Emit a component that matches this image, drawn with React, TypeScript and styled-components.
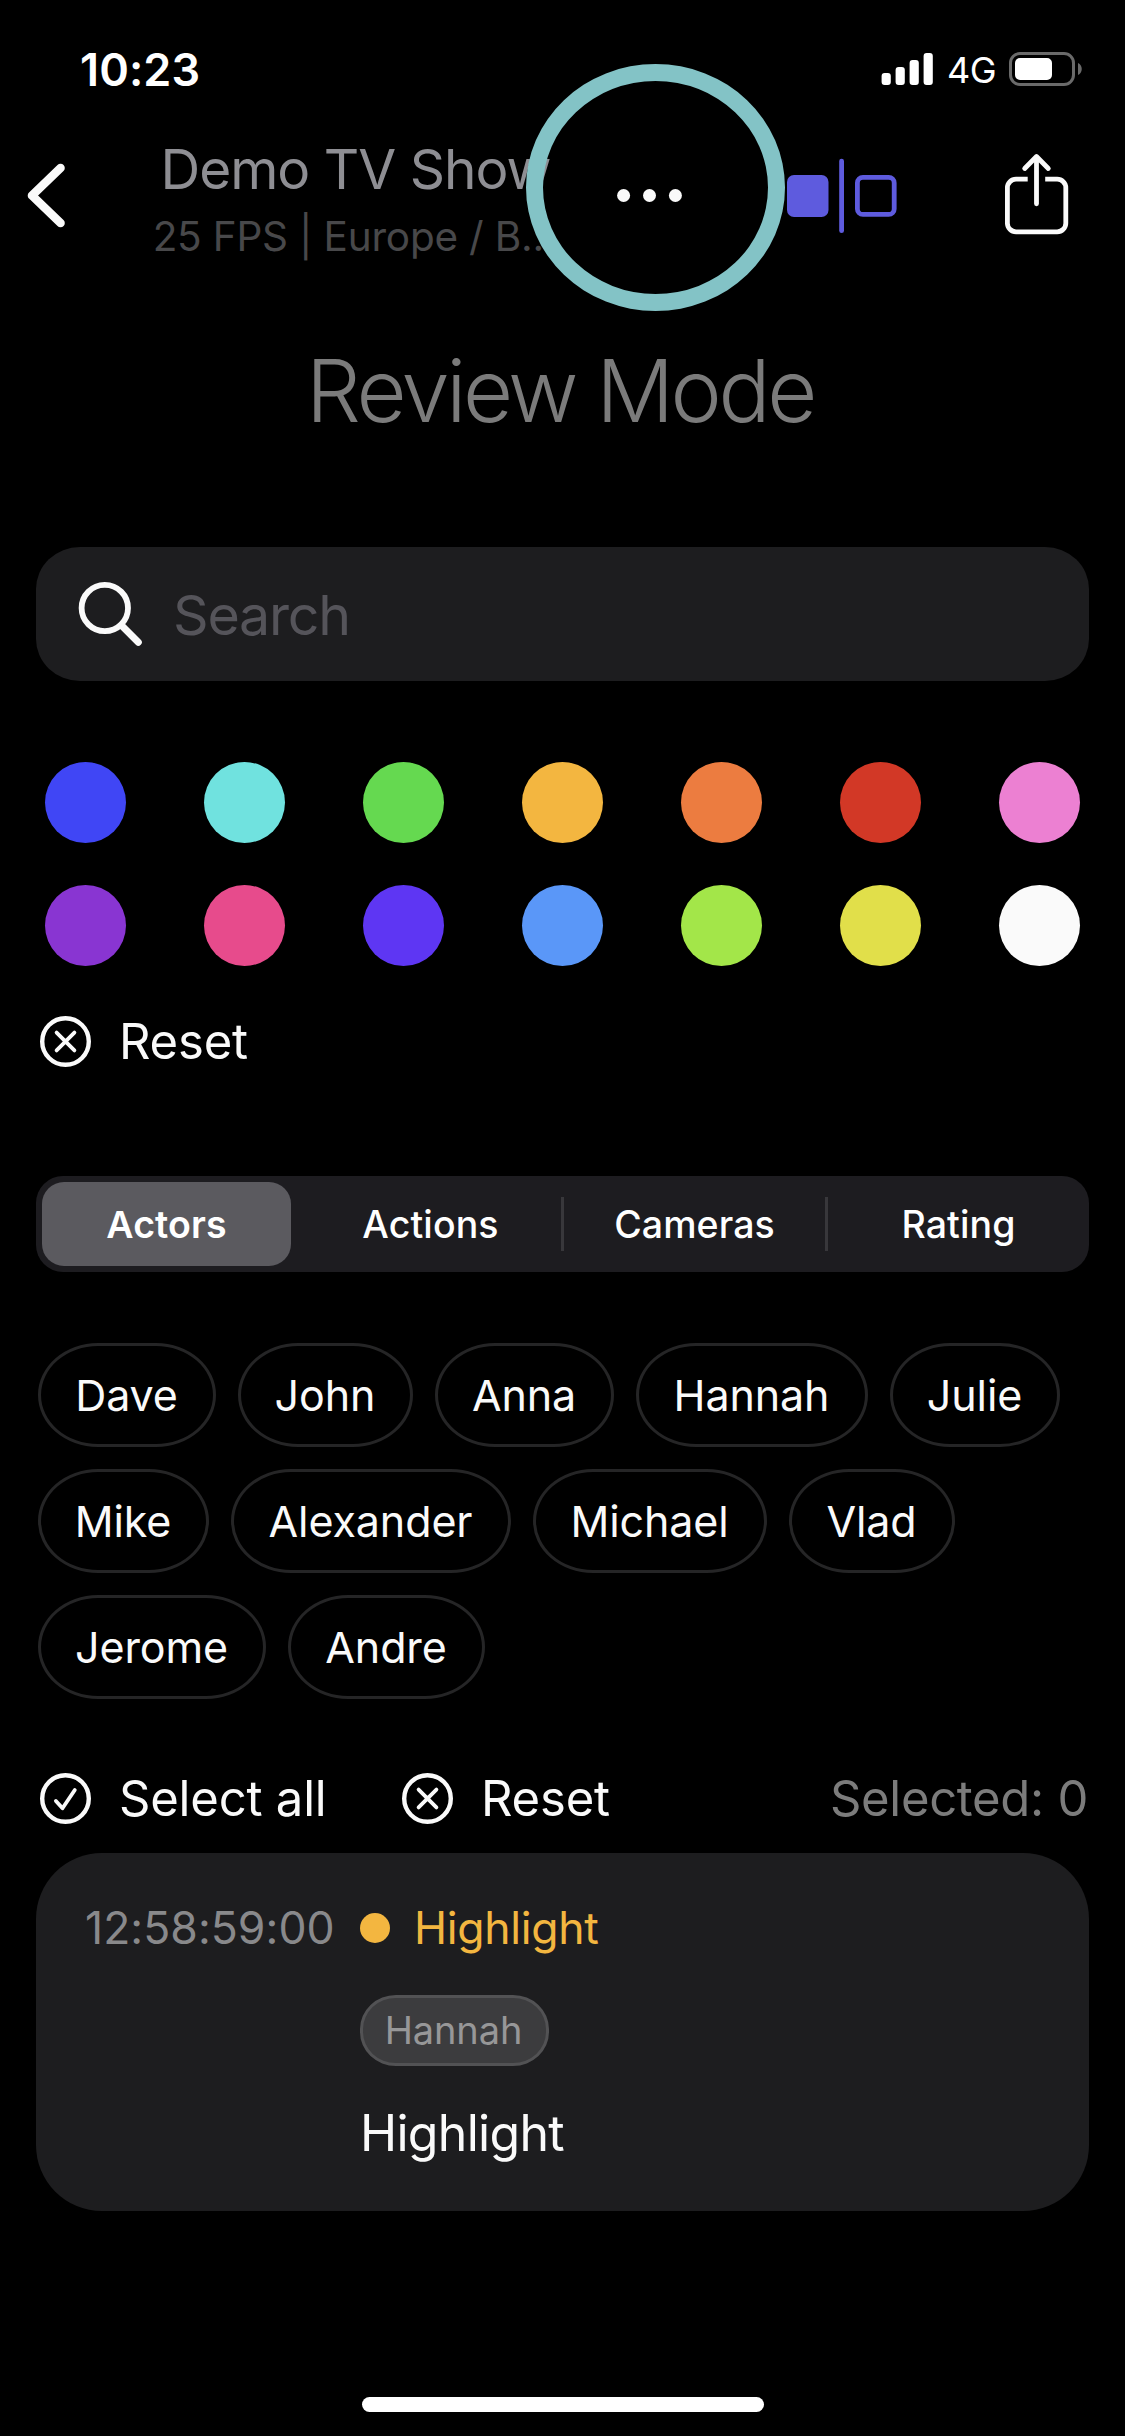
import React from "react";
import styled, { createGlobalStyle } from "styled-components";

const GlobalStyle = createGlobalStyle`
  *, *::before, *::after { box-sizing: border-box; }
  html, body { margin: 0; padding: 0; background: #000; }
  body { font-family: Inter, "Liberation Sans", sans-serif; color: #fafafa; }
  button { font: inherit; color: inherit; background: none; border: 0; padding: 0; margin: 0; }
  svg { display: block; flex: none; }
`;

const Screen = styled.div`
  width: 1125px;
  height: 2436px;
  background: #000;
  display: flex;
  flex-direction: column;
  overflow: hidden;
`;

const StatusBar = styled.header`
  flex: none;
  height: 138px;
  padding: 0 43px 0 80px;
  display: flex;
  align-items: center;
  justify-content: space-between;
  color: #fff;
`;

const Clock = styled.span`
  font-size: 45px;
  font-weight: 600;
  letter-spacing: 0.1px;
`;

const StatusIcons = styled.div`
  display: flex;
  align-items: center;
`;

const Network = styled.span`
  width: 48px;
  margin: 2px 14px 0 14px;
  font-size: 36px;
  line-height: 40px;
  font-weight: 400;
  letter-spacing: -0.5px;
  white-space: nowrap;
`;

const NavBar = styled.nav`
  flex: none;
  height: 124px;
  display: grid;
  grid-template-columns: 155px 397px 1fr;
  align-items: start;
`;

const NavButton = styled.button<{ $left?: number }>`
  position: relative;
  display: block;
  margin-left: ${(p) => p.$left ?? 0}px;
`;

const NavActions = styled.div`
  display: flex;
`;

const TitleBlock = styled.div`
  display: flex;
  flex-direction: column;
  align-items: center;
  padding-top: 1px;
  white-space: nowrap;
`;

const ShowTitle = styled.div`
  margin-left: 4px;
  font-size: 55px;
  line-height: 60px;
  letter-spacing: -1px;
  color: #8e8e93;
`;

const ShowMeta = styled.div`
  margin: 13px 0 0 1px;
  font-size: 40.5px;
  line-height: 50px;
  letter-spacing: -0.2px;
  color: #48484a;
`;

const FocusRing = styled.span`
  position: absolute;
  left: -85px;
  top: -74px;
  width: 259px;
  height: 247px;
  border: 17px solid #83c3c6;
  border-radius: 50%;
`;

const Content = styled.main`
  flex: 1;
  padding: 0 36px;
  display: flex;
  flex-direction: column;
`;

const Heading = styled.h1`
  margin: 79px 0 0;
  font-size: 86.5px;
  line-height: 100px;
  font-weight: 300;
  letter-spacing: -3.4px;
  text-indent: -5px;
  text-align: center;
  color: #7b7b7b;
`;

const SearchField = styled.div`
  height: 134px;
  margin-top: 106px;
  padding-left: 42px;
  display: flex;
  align-items: center;
  gap: 29px;
  border-radius: 44px / 42px;
  background: #1d1d1f;
  font-size: 55.5px;
  letter-spacing: -1.2px;
  color: #55545a;
`;

const Swatches = styled.div`
  margin-top: 81px;
  padding: 0 9px;
  display: grid;
  grid-template-columns: repeat(7, 81px);
  justify-content: space-between;
  row-gap: 42px;
`;

const Swatch = styled.button<{ $color: string }>`
  width: 81px;
  height: 81px;
  border-radius: 50%;
  background: ${(p) => p.$color};
`;

const ActionRow = styled.div<{ $top: number }>`
  height: 51px;
  margin-top: ${(p) => p.$top}px;
  padding: 0 1px 0 4px;
  display: flex;
  align-items: center;
`;

const Action = styled.button<{ $width?: number }>`
  width: ${(p) => (p.$width ? `${p.$width}px` : "auto")};
  display: flex;
  align-items: center;
  gap: 28px;
  font-size: 49px;
  line-height: 52px;
  letter-spacing: -0.2px;
  white-space: nowrap;
`;

const SelectedCount = styled.span`
  margin-left: auto;
  font-size: 49px;
  line-height: 52px;
  letter-spacing: -0.3px;
  color: #7c7c7c;
`;

const Segments = styled.div`
  height: 96px;
  margin-top: 109px;
  display: grid;
  grid-template-columns: 264px 264px 264px 1fr;
  border-radius: 27px;
  background: #1d1c20;
`;

const Segment = styled.button<{ $selected?: boolean; $divided?: boolean }>`
  display: flex;
  align-items: center;
  justify-content: center;
  margin: ${(p) => (p.$selected ? "6px 9px 6px 6px" : "0")};
  padding: ${(p) => (p.$divided ? "0 3px 0 0" : "0")};
  border-radius: ${(p) => (p.$divided ? 0 : 22)}px;
  background: ${(p) =>
    p.$selected
      ? "#5b5a5f"
      : p.$divided
        ? "linear-gradient(#38373b, #38373b) right center / 3px 54px no-repeat"
        : "none"};
  font-size: 37.5px;
  font-weight: ${(p) => (p.$selected ? 600 : 500)};
  letter-spacing: 0.1px;
  color: #fff;
`;

const Chips = styled.div`
  margin: 71px 0 0 2px;
  display: flex;
  flex-direction: column;
  gap: 22px;
`;

const ChipRow = styled.div`
  display: flex;
  gap: 22px;
`;

const Chip = styled.button<{ $width: number }>`
  width: ${(p) => p.$width}px;
  height: 104px;
  padding-right: 1px;
  display: flex;
  align-items: center;
  justify-content: center;
  border: 3px solid #252526;
  border-radius: 60px / 52px;
  font-size: 43px;
  letter-spacing: -0.1px;
`;

const Card = styled.article`
  height: 358px;
  margin-top: 29px;
  padding: 45px 49px 0;
  display: grid;
  grid-template-columns: 275px 1fr;
  align-items: start;
  border-radius: 66px;
  background: #1d1d1f;
`;

const Timecode = styled.time`
  font-size: 44.5px;
  line-height: 60px;
  letter-spacing: 0.05px;
  color: #89898b;
`;

const Entry = styled.div`
  display: flex;
  flex-direction: column;
  align-items: flex-start;
`;

const EntryLabel = styled.div`
  display: flex;
  align-items: center;
  gap: 24px;
  font-size: 44.5px;
  line-height: 60px;
  letter-spacing: -0.3px;
  color: #f3b640;
`;

const LabelDot = styled.span`
  width: 30px;
  height: 30px;
  border-radius: 50%;
  background: #f3b640;
`;

const ActorTag = styled.span`
  width: 189px;
  height: 71px;
  margin-top: 37px;
  padding: 0 2px 2px 0;
  display: flex;
  align-items: center;
  justify-content: center;
  border: 3px solid #525254;
  border-radius: 36px / 34px;
  background: #3c3c3e;
  font-size: 38px;
  letter-spacing: -0.1px;
  color: #979798;
`;

const EntryNote = styled.p`
  margin: 37px 0 0;
  font-size: 50px;
  line-height: 60px;
  letter-spacing: -0.7px;
`;

const HomeIndicator = styled.div`
  flex: none;
  align-self: center;
  width: 402px;
  height: 15px;
  margin-bottom: 24px;
  border-radius: 8px;
  background: #fff;
`;

const SignalIcon = () => (
  <svg width="52" height="34" viewBox="0 0 52 34" fill="#fff">
    <rect x="0.6" y="21" width="9.2" height="12" rx="3" />
    <rect x="14.6" y="15" width="9.2" height="18" rx="3" />
    <rect x="28.6" y="8" width="9.2" height="25" rx="3" />
    <rect x="42.6" y="1" width="9.2" height="32" rx="3" />
  </svg>
);

const BatteryIcon = () => (
  <svg width="73" height="34" viewBox="0 0 73 34">
    <rect x="1.5" y="1.5" width="63" height="31" rx="9.5" fill="none" stroke="#6a6a6a" strokeWidth="3" />
    <rect x="6" y="6" width="37" height="22" rx="5" fill="#fff" />
    <path d="M69 11c5 2 5 10 0 12z" fill="#6a6a6a" />
  </svg>
);

const BackIcon = () => (
  <svg width="80" height="115" viewBox="0 0 80 115">
    <path d="M60.5 30 32 57.5 60.5 85" fill="none" stroke="#fafafa" strokeWidth="8.6" strokeLinecap="round" strokeLinejoin="round" />
  </svg>
);

const MoreIcon = () => (
  <svg width="90" height="115" viewBox="0 0 90 115" fill="#fafafa">
    <circle cx="12.6" cy="57.5" r="6.5" />
    <circle cx="38.5" cy="57.5" r="6.5" />
    <circle cx="64.4" cy="57.5" r="6.5" />
  </svg>
);

const CompareIcon = () => (
  <svg width="110" height="115" viewBox="0 0 110 115">
    <rect x="0" y="37" width="41.5" height="42" rx="7" fill="#5e5bde" />
    <rect x="52.2" y="20.7" width="4.8" height="74.4" rx="2.4" fill="#5e5bde" />
    <rect x="70.4" y="39.4" width="36.8" height="37" rx="5.5" fill="none" stroke="#5e5bde" strokeWidth="4.8" />
  </svg>
);

const ShareIcon = () => (
  <svg width="64" height="115" viewBox="0 0 64 115" fill="none" stroke="#fafafa" strokeWidth="4.8">
    <path d="M22.7 41.2H11a8.6 8.6 0 0 0-8.6 8.6v35.4a8.6 8.6 0 0 0 8.6 8.6h41.2a8.6 8.6 0 0 0 8.6-8.6V49.8a8.6 8.6 0 0 0-8.6-8.6H40.2" />
    <path d="M31.5 19v46.8M19.7 30.5 31.5 18.5 43.3 30.5" strokeLinecap="round" strokeLinejoin="round" />
  </svg>
);

const SearchIcon = () => (
  <svg width="66" height="66" viewBox="0 0 66 66" fill="none" stroke="#fafafa" strokeLinecap="round">
    <circle cx="26.8" cy="27" r="23.2" strokeWidth="5.8" />
    <path d="M43.6 44.5 60.3 61.2" strokeWidth="7" />
  </svg>
);

const CrossIcon = () => (
  <svg width="51" height="51" viewBox="0 0 51 51" fill="none" stroke="#fafafa" strokeLinecap="round">
    <circle cx="25.5" cy="25.5" r="23.3" strokeWidth="4.4" />
    <path d="M16.6 16.6 34.4 34.4M34.4 16.6 16.6 34.4" strokeWidth="3.8" />
  </svg>
);

const CheckIcon = () => (
  <svg width="51" height="51" viewBox="0 0 51 51" fill="none" stroke="#fafafa" strokeLinecap="round" strokeLinejoin="round">
    <circle cx="25.5" cy="25.5" r="23.3" strokeWidth="4.4" />
    <path d="M15.9 28 22.5 35.3 34.8 17" strokeWidth="3.8" />
  </svg>
);

const swatchColors = [
  "#4046f5", "#70e2df", "#65d950", "#f3b640", "#ec7c40", "#d23826", "#ec80d2",
  "#8935d2", "#e74b8c", "#5e36f3", "#5a97f8", "#a3e649", "#e1df4a", "#fafafa",
];

const segments = ["Actors", "Actions", "Cameras", "Rating"];

const actorRows = [
  [
    { name: "Dave", width: 178 },
    { name: "John", width: 175 },
    { name: "Anna", width: 179 },
    { name: "Hannah", width: 232 },
    { name: "Julie", width: 170 },
  ],
  [
    { name: "Mike", width: 171 },
    { name: "Alexander", width: 280 },
    { name: "Michael", width: 234 },
    { name: "Vlad", width: 166 },
  ],
  [
    { name: "Jerome", width: 228 },
    { name: "Andre", width: 197 },
  ],
];

export default function App() {
  return (
    <>
      <GlobalStyle />
      <Screen>
        <StatusBar>
          <Clock>10:23</Clock>
          <StatusIcons>
            <SignalIcon />
            <Network>4G</Network>
            <BatteryIcon />
          </StatusIcons>
        </StatusBar>
        <NavBar>
          <NavButton aria-label="Back">
            <BackIcon />
          </NavButton>
          <TitleBlock>
            <ShowTitle>Demo TV Show</ShowTitle>
            <ShowMeta>25 FPS | Europe / B...</ShowMeta>
          </TitleBlock>
          <NavActions>
            <NavButton aria-label="More" $left={59}>
              <MoreIcon />
              <FocusRing />
            </NavButton>
            <NavButton aria-label="Compare" $left={86}>
              <CompareIcon />
            </NavButton>
            <NavButton aria-label="Share" $left={108}>
              <ShareIcon />
            </NavButton>
          </NavActions>
        </NavBar>
        <Content>
          <Heading>Review Mode</Heading>
          <SearchField>
            <SearchIcon />
            <span>Search</span>
          </SearchField>
          <Swatches>
            {swatchColors.map((c) => (
              <Swatch key={c} $color={c} />
            ))}
          </Swatches>
          <ActionRow $top={50}>
            <Action>
              <CrossIcon />
              Reset
            </Action>
          </ActionRow>
          <Segments>
            {segments.map((s, i) => (
              <Segment key={s} $selected={i === 0} $divided={i === 1 || i === 2}>
                {s}
              </Segment>
            ))}
          </Segments>
          <Chips>
            {actorRows.map((row, i) => (
              <ChipRow key={i}>
                {row.map((a) => (
                  <Chip key={a.name} $width={a.width}>
                    {a.name}
                  </Chip>
                ))}
              </ChipRow>
            ))}
          </Chips>
          <ActionRow $top={74}>
            <Action $width={362}>
              <CheckIcon />
              Select all
            </Action>
            <Action>
              <CrossIcon />
              Reset
            </Action>
            <SelectedCount>Selected: 0</SelectedCount>
          </ActionRow>
          <Card>
            <Timecode>12:58:59:00</Timecode>
            <Entry>
              <EntryLabel>
                <LabelDot />
                Highlight
              </EntryLabel>
              <ActorTag>Hannah</ActorTag>
              <EntryNote>Highlight</EntryNote>
            </Entry>
          </Card>
        </Content>
        <HomeIndicator />
      </Screen>
    </>
  );
}
